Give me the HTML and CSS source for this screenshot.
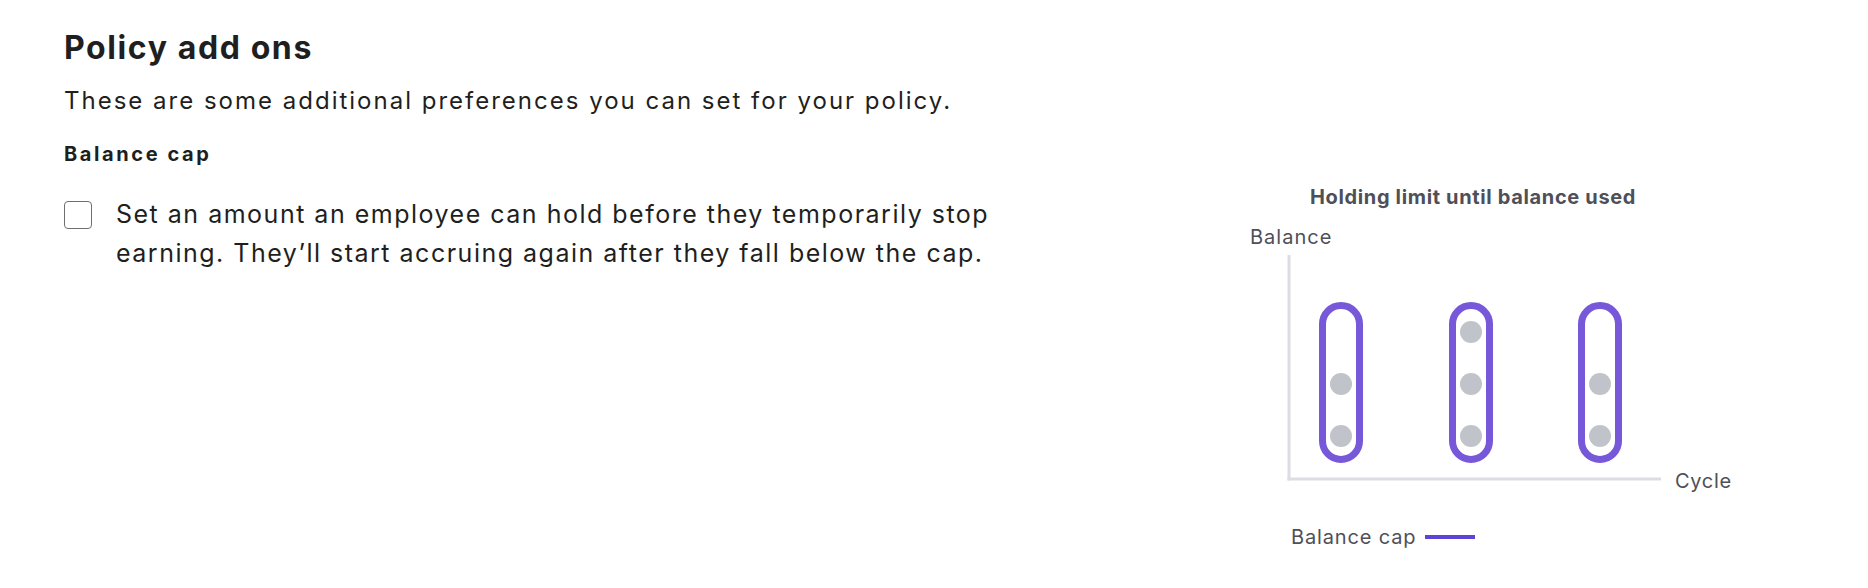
FILE: index.html
```html
<!DOCTYPE html>
<html lang="en">
  <head>
    <meta charset="UTF-8" />
    <meta name="viewport" content="width=device-width, initial-scale=1.0" />
    <title>Policy add ons</title>
    <link rel="stylesheet" href="styles.css">
  </head>
  <body>
    <main class="page">
      <section class="addons">
        <h2>Policy add ons</h2>
        <p class="lead">These are some additional preferences you can set for your policy.</p>
        <h3>Balance cap</h3>
        <label class="option">
          <input type="checkbox" />
          <span class="box"></span>
          <span class="option-text">Set an amount an employee can hold before they temporarily stop earning. They’ll start accruing again after they fall below the cap.</span>
        </label>
      </section>

      <figure class="chart">
        <figcaption class="chart-title">Holding limit until balance used</figcaption>
        <div class="axis-y">Balance</div>
        <div class="plot">
          <svg width="378" height="238" viewBox="0 0 378 238">
            <!-- axes -->
            <line x1="3" y1="0" x2="3" y2="225.5" stroke="#dcdde2" stroke-width="3" />
            <line x1="1.5" y1="224" x2="375" y2="224" stroke="#dcdde2" stroke-width="3" />
            <!-- cycle 1 -->
            <rect x="36.5" y="50.5" width="37" height="154" rx="18.5" fill="none" stroke="#7658d9" stroke-width="7" />
            <circle cx="55" cy="129" r="11" fill="#c0c3ca" />
            <circle cx="55" cy="181" r="11" fill="#c0c3ca" />
            <!-- cycle 2 -->
            <rect x="166.5" y="50.5" width="37" height="154" rx="18.5" fill="none" stroke="#7658d9" stroke-width="7" />
            <circle cx="185" cy="77" r="11" fill="#c0c3ca" />
            <circle cx="185" cy="129" r="11" fill="#c0c3ca" />
            <circle cx="185" cy="181" r="11" fill="#c0c3ca" />
            <!-- cycle 3 -->
            <rect x="295.5" y="50.5" width="37" height="154" rx="18.5" fill="none" stroke="#7658d9" stroke-width="7" />
            <circle cx="314" cy="129" r="11" fill="#c0c3ca" />
            <circle cx="314" cy="181" r="11" fill="#c0c3ca" />
          </svg>
          <span class="axis-x">Cycle</span>
        </div>
        <div class="legend">
          <span>Balance cap</span>
          <span class="legend-line"></span>
        </div>
      </figure>
    </main>
  </body>
</html>
```

FILE: styles.css
```css
* {
  margin: 0;
  padding: 0;
  box-sizing: border-box;
}
body {
  background: #fff;
  font-family: Inter, "Liberation Sans", Arial, sans-serif;
  color: #1f1f21;
}
.page {
  display: flex;
  padding: 28px 172px 0 64px;
  height: 588px;
}
.addons {
  flex: 1;
}
h2 {
  font-size: 32px;
  line-height: 40px;
  font-weight: 700;
  letter-spacing: 1.6px;
}
.lead {
  margin-top: 17px;
  font-size: 24px;
  line-height: 32px;
  letter-spacing: 2px;
}
h3 {
  margin-top: 23px;
  font-size: 20px;
  line-height: 28px;
  font-weight: 700;
  letter-spacing: 2.6px;
}
.option {
  display: flex;
  gap: 24px;
  margin-top: 27px;
  cursor: pointer;
}
.option input {
  display: none;
}
.box {
  flex: none;
  width: 28px;
  height: 28px;
  margin-top: 6px;
  border: 1.5px solid #6f6f72;
  border-radius: 4px;
}
.option-text {
  max-width: 940px;
  font-size: 25px;
  line-height: 39px;
  letter-spacing: 1.5px;
}

/* chart */
.chart {
  width: 446px;
  margin-top: 157px;
  color: #4f4f58;
}
.chart-title {
  font-size: 20px;
  line-height: 24px;
  font-weight: 700;
  letter-spacing: 0.65px;
  text-align: center;
}
.axis-y {
  margin-top: 16px;
  font-size: 20px;
  line-height: 24px;
  letter-spacing: 1px;
}
.plot {
  display: flex;
  align-items: flex-start;
  gap: 11px;
  margin-top: 6px;
  margin-left: 36px;
  width: 480px;
}
.plot svg {
  flex: none;
  display: block;
}
.axis-x {
  margin-top: 214px;
  font-size: 20px;
  line-height: 24px;
  letter-spacing: 0.7px;
}
.legend {
  display: flex;
  align-items: center;
  gap: 9px;
  margin-top: 32px;
  margin-left: 41px;
  font-size: 20px;
  line-height: 24px;
  letter-spacing: 0.85px;
}
.legend-line {
  width: 50px;
  height: 4px;
  background: #5d43d6;
}
```
